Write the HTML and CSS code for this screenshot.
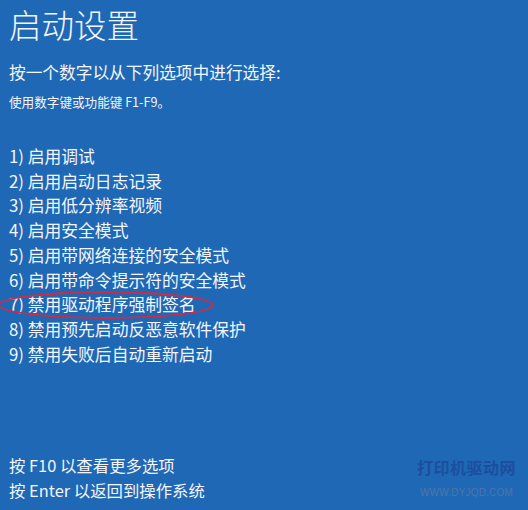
FILE: index.html
```html
<!DOCTYPE html>
<html lang="zh-CN">
<head>
<meta charset="utf-8">
<title>启动设置</title>
<link rel="stylesheet" href="styles.css">
</head>
<body>
<div class="screen">
  <h1 class="title">启动设置</h1>
  <p class="prompt">按一个数字以从下列选项中进行选择:</p>
  <p class="hint">使用数字键或功能键 F1-F9。</p>
  <ol class="options">
    <li>1) 启用调试</li>
    <li>2) 启用启动日志记录</li>
    <li>3) 启用低分辨率视频</li>
    <li>4) 启用安全模式</li>
    <li>5) 启用带网络连接的安全模式</li>
    <li>6) 启用带命令提示符的安全模式</li>
    <li class="marked">7) 禁用驱动程序强制签名<svg class="ring" width="220" height="30" viewBox="0 0 220 30"><ellipse cx="110" cy="15" rx="107" ry="13" fill="none" stroke="#cf2b42" stroke-width="1.8"/></svg></li>
    <li>8) 禁用预先启动反恶意软件保护</li>
    <li>9) 禁用失败后自动重新启动</li>
  </ol>
  <div class="footer">
    <p>按 F10 以查看更多选项</p>
    <p>按 Enter 以返回到操作系统</p>
  </div>
  <div class="watermark">
    <div class="wm-name">打印机驱动网</div>
    <div class="wm-url">WWW.DYJQD.COM</div>
  </div>
</div>
</body>
</html>
```

FILE: styles.css
```css
html, body {
  margin: 0;
  padding: 0;
}
.screen {
  position: relative;
  width: 528px;
  height: 510px;
  box-sizing: border-box;
  padding: 0 0 7px 9px;
  background: #1f68b5;
  color: #f3f6fb;
  font-family: "Noto Sans CJK SC", "Noto Sans", sans-serif;
  display: flex;
  flex-direction: column;
  overflow: hidden;
}
.title {
  margin: 0;
  font-size: 32.5px;
  font-weight: 300;
  line-height: 48px;
}
.prompt {
  margin: 12px 0 0;
  font-size: 16.7px;
  line-height: 24px;
}
.hint {
  margin: 8px 0 0;
  font-size: 12.6px;
  line-height: 20px;
}
.options {
  list-style: none;
  margin: 32px 0 0;
  padding: 0;
  font-size: 16.8px;
  line-height: 24.7px;
}
.options li {
  position: relative;
}
.ring {
  position: absolute;
  left: -13px;
  top: -2px;
  pointer-events: none;
}
.footer {
  margin-top: auto;
  font-size: 16.4px;
  line-height: 25px;
}
.footer p {
  margin: 0;
}
.watermark {
  position: absolute;
  right: 12px;
  bottom: 12px;
  text-align: center;
}
.wm-name {
  font-size: 16px;
  font-weight: 700;
  line-height: 22px;
  color: #1b4f9e;
  letter-spacing: 0.5px;
}
.wm-url {
  margin-top: 10px;
  font-family: "Liberation Sans", sans-serif;
  font-size: 10px;
  line-height: 10px;
  letter-spacing: 0.2px;
  color: #4f76a8;
}
```
